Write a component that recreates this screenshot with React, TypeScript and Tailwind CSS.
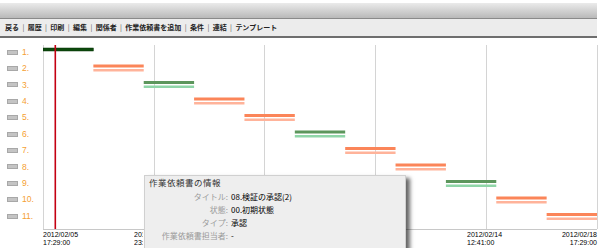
import React from "react";

const JP = { fontFamily: '"Noto Sans CJK JP", "Liberation Sans", sans-serif' };
const LAT = { fontFamily: '"Liberation Sans", Arial, sans-serif' };

const menu = ["戻る", "履歴", "印刷", "編集", "関係者", "作業依頼書を追加", "条件", "連結", "テンプレート"];

// kind: 0 = first (single dark bar), 1 = orange, 2 = green
const tasks = [0, 1, 2, 1, 1, 2, 1, 1, 2, 1, 1];

const CHART_W = 554;
const CHART_H = 184;
const STEP = CHART_W / 11;
const grid = [0, 111, 221, 332, 443, 554];

function GanttChart() {
  return (
    <svg width={CHART_W + 1} height={CHART_H + 1} className="block">
      {grid.map((x) => (
        <line key={x} x1={x + 0.5} y1={0} x2={x + 0.5} y2={CHART_H} stroke="#d4d4d4" strokeWidth={1} />
      ))}
      <line x1={0} y1={CHART_H + 0.5} x2={CHART_W} y2={CHART_H + 0.5} stroke="#c8c8c8" strokeWidth={1} />
      {tasks.map((kind, i) => {
        const x = i * STEP;
        const y = 3 + i * 16.5;
        if (kind === 0) {
          return <rect key={i} x={x} y={y} width={STEP} height={3} fill="#0d4a0d" stroke="#063306" strokeWidth={0.5} />;
        }
        const top = kind === 1 ? "#fb8559" : "#5c965c";
        const bottom = kind === 1 ? "#ffb39a" : "#8fd6a8";
        return (
          <g key={i}>
            <rect x={x} y={y} width={STEP} height={3} fill={top} />
            <rect x={x} y={y + 4.5} width={STEP} height={2.5} fill={bottom} />
          </g>
        );
      })}
      <rect x={11.5} y={0} width={1.6} height={CHART_H} fill="#c40012" />
    </svg>
  );
}

function AxisLabel({ d, t }: { d: string; t: string }) {
  return (
    <div className="whitespace-nowrap">
      <div>{d}</div>
      <div>{t}</div>
    </div>
  );
}

export default function App() {
  return (
    <div className="relative h-[248px] w-[600px] overflow-hidden bg-white">
      <div className="pr-[3px] pt-[3px]">
        <div className="h-[16px] border-b border-[#8a8a8a] bg-gradient-to-b from-[#ebebeb] to-[#b9b9b9]" />
        <div
          className="flex h-[19px] items-center border-b-2 border-[#6e6e6e] bg-[#ececec] pl-[5px] text-[7px] font-bold text-[#222]"
          style={JP}
        >
          {menu.map((m, i) => (
            <span key={m} className="flex items-center">
              {i > 0 && <span className="px-[3.4px] font-normal text-[#555]">|</span>}
              {m}
            </span>
          ))}
        </div>
      </div>

      <div className="mt-[6px] flex">
        <div className="w-[43px]">
          {tasks.map((_, i) => (
            <div key={i} className="flex h-[16.4px] items-center pl-[7px]">
              <div className="h-[5px] w-[11px] border border-[#a8a8a8] bg-[#c4c4c4]" />
              <span className="ml-[4px] text-[8.5px] text-[#f5a033]" style={LAT}>
                {i + 1}.
              </span>
            </div>
          ))}
        </div>
        <div className="pt-px">
          <GanttChart />
        </div>
      </div>

      <div className="flex h-[16px] pl-[43px] pt-px text-[7px] leading-[7.5px] text-black" style={LAT}>
        <AxisLabel d="2012/02/05" t="17:29:00" />
        {/* partly hidden under the info popup */}
        <div className="ml-[56px] w-[9px] overflow-hidden">
          <AxisLabel d="2012/02/08" t="23:05:00" />
        </div>
        <div className="ml-[324px]">
          <AxisLabel d="2012/02/14" t="12:41:00" />
        </div>
        <div className="ml-auto pr-[3px] text-right">
          <AxisLabel d="2012/02/18" t="17:29:00" />
        </div>
      </div>

      <div
        className="absolute left-[144px] top-[175px] h-[90px] w-[262px] border border-[#d0d0d0] bg-[#eeeeee] px-[4px] shadow-[4px_3px_4px_rgba(0,0,0,0.6)]"
        style={JP}
      >
        <div className="text-[8.5px] leading-[13px] tracking-[0.5px] text-[#333]">作業依頼書の情報</div>
        <div className="mt-[2px] grid grid-cols-[79px_1fr] text-[8px] leading-[12.9px]">
          <div className="text-right text-[#9a9a9a]">タイトル:</div>
          <div className="pl-[3px] text-black">08.検証の承認(2)</div>
          <div className="text-right text-[#9a9a9a]">状態:</div>
          <div className="pl-[3px] text-black">00.初期状態</div>
          <div className="text-right text-[#9a9a9a]">タイプ:</div>
          <div className="pl-[3px] text-black">承認</div>
          <div className="text-right text-[#9a9a9a]">作業依頼書担当者:</div>
          <div className="pl-[3px] text-black">-</div>
        </div>
      </div>
    </div>
  );
}
